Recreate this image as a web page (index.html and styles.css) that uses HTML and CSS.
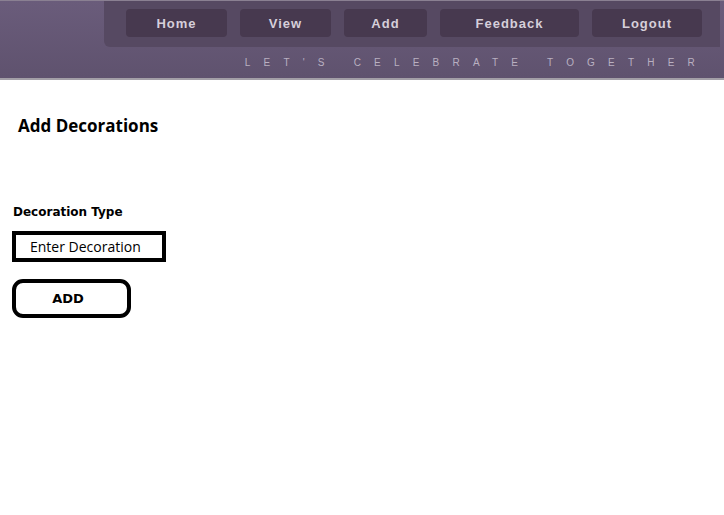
FILE: index.html
```
<!DOCTYPE html>
<html>
<head>
<meta charset="utf-8">
<link rel="stylesheet" href="styles.css">
</head>
<body>
<header class="header">
  <div class="header-inner">
    <nav class="nav">
      <a class="nav-btn w-home">Home</a>
      <a class="nav-btn w-view">View</a>
      <a class="nav-btn w-add">Add</a>
      <a class="nav-btn w-feedback">Feedback</a>
      <a class="nav-btn w-logout">Logout</a>
    </nav>
    <div class="tagline">LET'S CELEBRATE TOGETHER</div>
  </div>
</header>
<main class="main">
  <h1 class="title">Add Decorations</h1>
  <form class="form">
    <label class="label">Decoration Type</label>
    <div class="input">Enter Decoration</div>
    <button type="button" class="btn">ADD</button>
  </form>
</main>
</body>
</html>
```
FILE: styles.css
```
html, body { margin: 0; padding: 0; background: #fff; }
body { width: 724px; height: 515px; overflow: hidden; }
.header {
  background: linear-gradient(180deg, #6a5c7b 0%, #5f526e 100%);
  border-top: 1px solid #8a8092;
  border-bottom: 2px solid #a39fa7;
  box-sizing: content-box;
  height: 77px;
}
.header-inner { display: flex; flex-direction: column; align-items: flex-end; }
.nav {
  width: 616px;
  margin-right: 4px;
  height: 46px;
  box-sizing: border-box;
  background: #564962;
  border-radius: 0 0 0 6px;
  display: flex;
  gap: 13px;
  padding: 8px 0 0 22px;
}
.nav-btn {
  height: 28px;
  background: #47394f;
  border-radius: 4px;
  color: #d6cfda;
  font-family: "Liberation Sans", Arial, sans-serif;
  font-weight: bold;
  font-size: 13px;
  letter-spacing: 1px;
  display: flex;
  align-items: center;
  justify-content: center;
  box-sizing: border-box;
}
.w-home { width: 101px; }
.w-view { width: 91px; }
.w-add { width: 83px; }
.w-feedback { width: 139px; }
.w-logout { width: 110px; }
.tagline {
  margin-top: 10px;
  margin-right: 16px;
  color: #b9b0c1;
  font-family: "Liberation Sans", Arial, sans-serif;
  font-size: 10px;
  letter-spacing: 13.2px;
  line-height: 12px;
}
.main { padding: 36px 0 0 12px; }
.title {
  margin: 0 0 0 6px;
  font-family: "Open Sans", sans-serif;
  font-weight: bold;
  font-size: 17px;
  line-height: 20px;
  color: #000;
}
.form { display: flex; flex-direction: column; align-items: flex-start; margin-top: 69px; }
.label {
  font-family: "DejaVu Sans", sans-serif;
  font-weight: bold;
  font-size: 12px;
  line-height: 14px;
  margin-left: 1px;
}
.input {
  margin-top: 12px;
  width: 154px;
  height: 31px;
  box-sizing: border-box;
  border: 4px solid #000;
  font-family: "Open Sans", sans-serif;
  font-size: 14px;
  padding-left: 14px;
  display: flex;
  align-items: center;
}
.btn {
  margin-top: 17px;
  width: 119px;
  height: 39px;
  box-sizing: border-box;
  border: 4px solid #000;
  border-radius: 11px;
  background: #fff;
  font-family: "DejaVu Sans", sans-serif;
  font-weight: bold;
  font-size: 13px;
  padding: 0 7px 0 0;
  color: #000;
}
```
